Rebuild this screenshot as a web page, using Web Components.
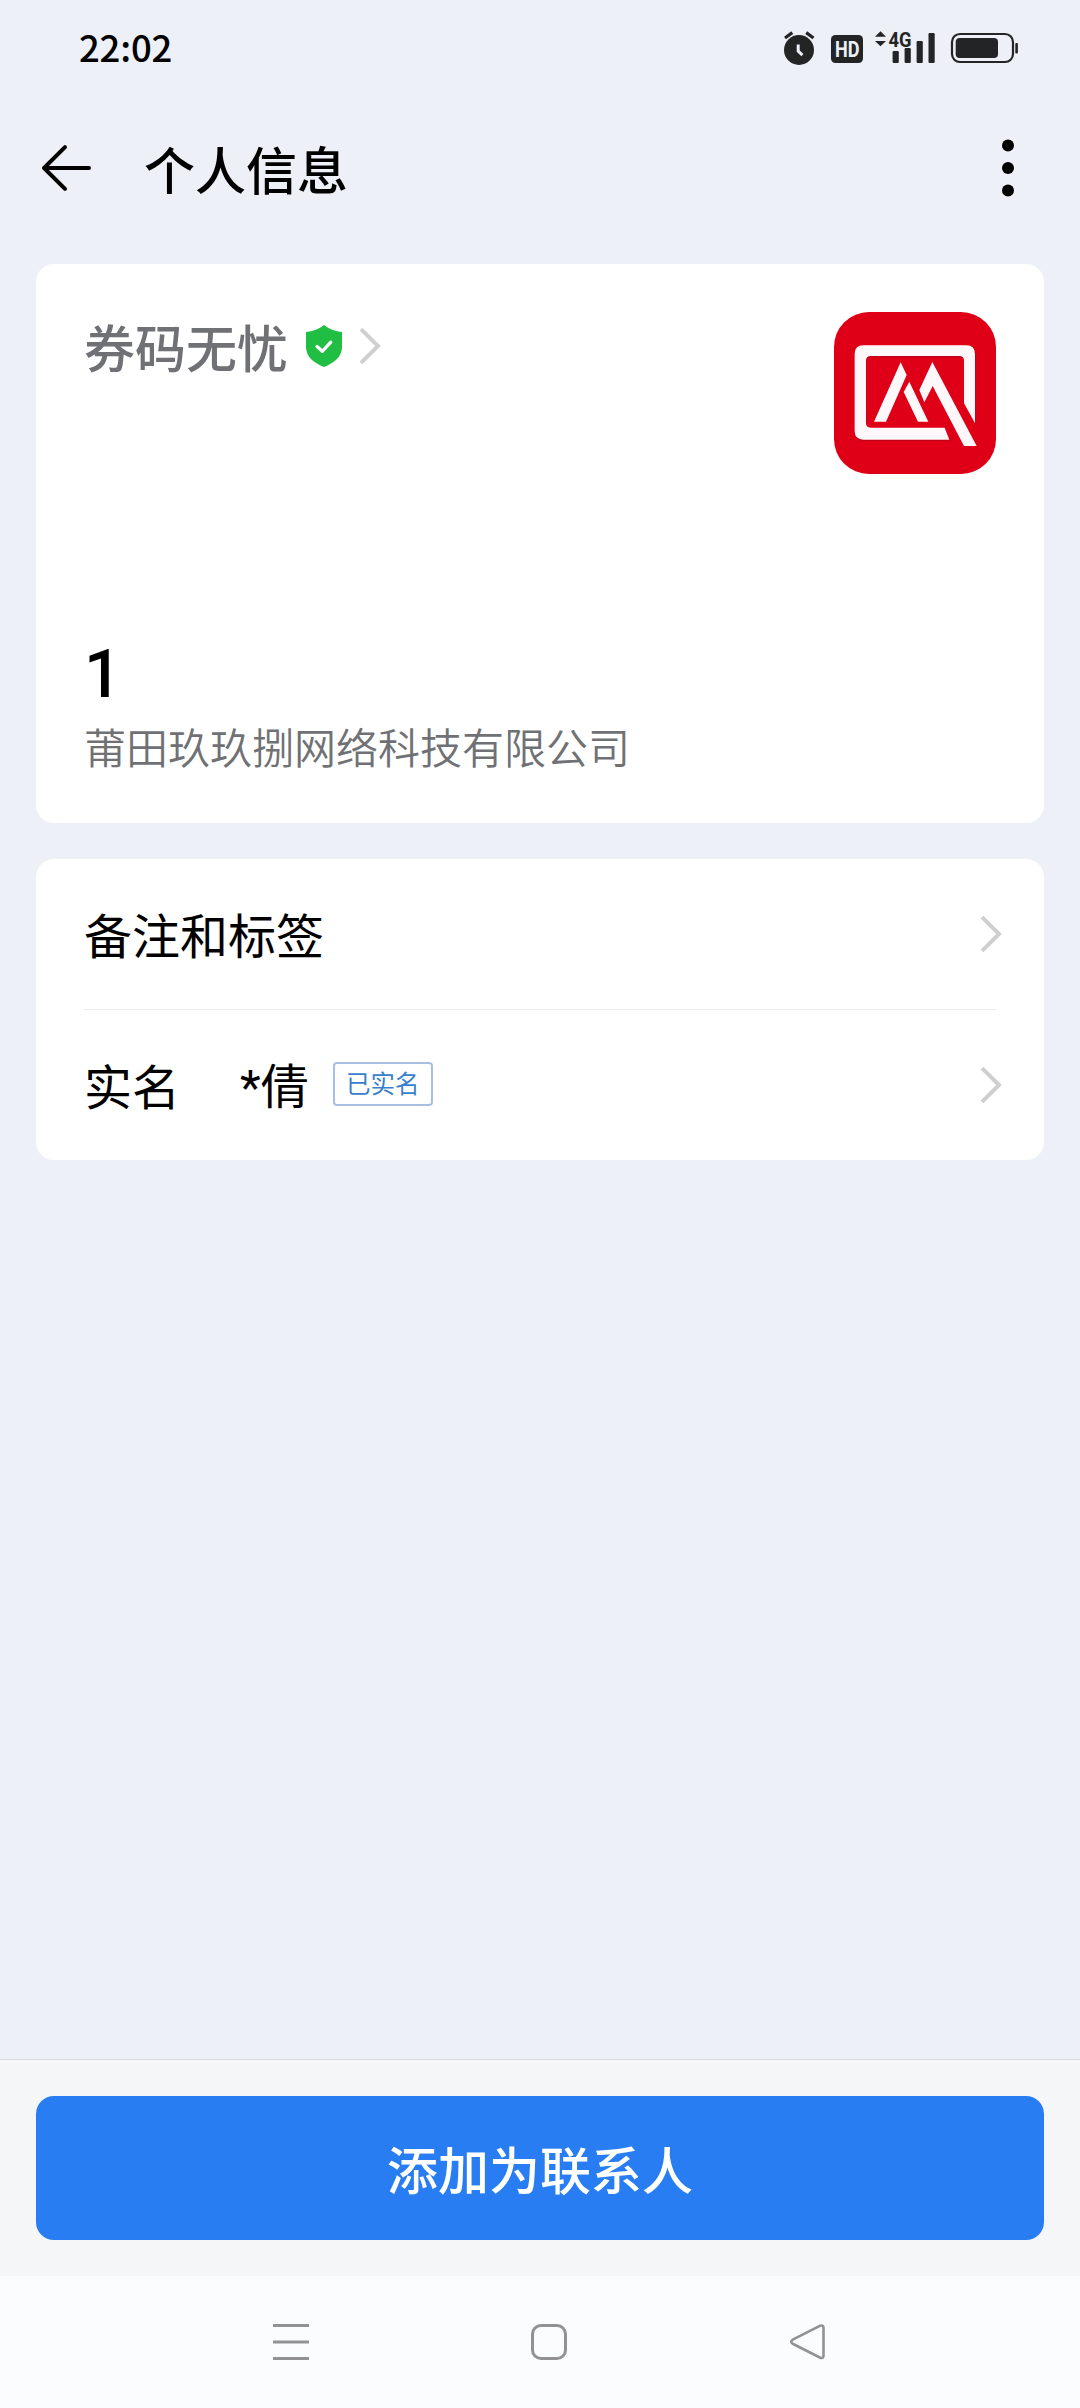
<!DOCTYPE html>
<html lang="zh-CN">
<head>
<meta charset="utf-8">
<title>个人信息</title>
<style>
html,body{margin:0;padding:0}
body{width:1080px;height:2408px;overflow:hidden;background:#edf0f6;font-family:"Noto Sans CJK SC",sans-serif;color:#000}
</style>
</head>
<body>
<profile-page></profile-page>
<script>
function define(name, html) {
  const t = document.createElement('template');
  t.innerHTML = html;
  customElements.define(name, class extends HTMLElement {
    constructor() {
      super();
      this.attachShadow({mode: 'open'}).appendChild(t.content.cloneNode(true));
    }
  });
}

define('status-bar', `
<style>
:host{display:flex;height:96px;box-sizing:border-box;padding:0 61px 0 79px;justify-content:space-between;align-items:flex-start}
.time{font-size:36.5px;line-height:54px;font-weight:500;margin-top:20px;letter-spacing:-.2px}
.icons{display:flex;margin-top:28px}
svg{display:block;height:40px}
</style>
<div class="time">22:02</div>
<div class="icons">
  <svg width="46" viewBox="780 28 46 40"><circle cx="799" cy="50" r="15" fill="#222426"/><path d="M785 38l7.3-5.4M806.2 32.6l7.3 5.4" stroke="#222426" stroke-width="3.2"/><path d="M798.2 44.5v6.6l4.2 4" stroke="#edf0f6" stroke-width="3" fill="none"/></svg>
  <svg width="47" viewBox="826 28 47 40"><rect x="831" y="35" width="32" height="28" rx="4.5" fill="#222426"/><text x="835" y="57" font-family="Roboto" font-weight="700" font-size="22.5" textLength="24.5" lengthAdjust="spacingAndGlyphs" fill="#edf0f6">HD</text></svg>
  <svg width="73" viewBox="873 28 73 40"><g fill="#222426"><path d="M875 36.8l5.5-5.6 5.5 5.6zM875 41l5.5 5.3 5.5-5.3z"/><rect x="892.6" y="51" width="6.2" height="12" rx="1.2"/><rect x="904.6" y="48" width="6.2" height="15" rx="1.2"/><rect x="916.6" y="41" width="6.2" height="22" rx="1.2"/><rect x="928.5" y="33" width="6.2" height="30" rx="1.2"/><text x="888.6" y="46.5" font-family="Roboto" font-weight="700" font-size="20.5" textLength="23" lengthAdjust="spacingAndGlyphs">4G</text></g></svg>
  <svg width="73" viewBox="946 28 73 40"><rect x="952" y="34" width="61" height="28" rx="8" fill="none" stroke="#222426" stroke-width="2.2"/><rect x="955.7" y="38" width="42.3" height="20" rx="4" fill="#222426"/><rect x="1015.3" y="43" width="2.6" height="10.5" rx="1" fill="#222426"/></svg>
</div>`);

define('title-bar', `
<style>
:host{display:flex;height:144px;align-items:center;padding:0 60px 0 36px}
svg{display:block}
.t{flex:1;margin-left:48px;font-size:51px;line-height:72px;font-weight:500}
</style>
<svg width="60" height="60" viewBox="36 138 60 60" fill="none" stroke="#000" stroke-width="4" stroke-linecap="round" stroke-linejoin="round"><path d="M89 168H44M65 147.2L44 168l21 20.8"/></svg>
<div class="t"><slot></slot></div>
<svg width="24" height="60" viewBox="996 138 24 60"><circle cx="1008" cy="145.5" r="6"/><circle cx="1008" cy="168" r="6"/><circle cx="1008" cy="190.5" r="6"/></svg>`);

define('arrow-icon', `
<style>:host{display:block;width:24px;height:42px}svg{display:block}</style>
<svg width="24" height="42" fill="none" stroke="#cfcfcf" stroke-width="4"><path d="M2 4.2L19 21 2 37.8"/></svg>`);

define('white-card', `
<style>:host{display:block;margin:0 36px;background:#fff;border-radius:18px;box-sizing:border-box}</style>
<slot></slot>`);

define('verified-shield', `
<style>:host{display:block}svg{display:block}</style>
<svg width="36" height="42"><path d="M18 0C23 4 29 6.5 36 7V22C36 32 28 38 18 42C8 38 0 32 0 22V7C7 6.5 13 4 18 0Z" fill="#20bf44"/><path d="M11 21.5l5.3 4.8 8.5-9.2" fill="none" stroke="#fff" stroke-width="3.2" stroke-linecap="round" stroke-linejoin="round"/></svg>`);

define('brand-logo', `
<style>:host{display:block}svg{display:block}</style>
<svg width="162" height="162" viewBox="72 66 486 486"><rect x="72" y="66" width="486" height="486" rx="105" fill="#df0018"/>
<path d="M495 400V192Q495 166 469 166H160Q134 166 134 192V423Q134 449 160 449H418L404 413H182Q168 413 168 399V212Q168 198 182 198H448Q462 198 462 212V340Z" fill="#a9051a" transform="translate(2 4)" opacity=".6"/>
<path d="M495 400V192Q495 166 469 166H160Q134 166 134 192V423Q134 449 160 449H418L404 413H182Q168 413 168 399V212Q168 198 182 198H448Q462 198 462 212V340ZM272 217L290 255 228 395H192ZM298 275L355 395H324L281 306ZM367 216L500 468H462L368 288 343 337 328 300Z" fill="#fff8fb"/></svg>`);

define('merchant-card', `
<style>
:host{display:flex;height:559px;box-sizing:border-box;padding:48px 48px 0;justify-content:space-between}
.info{display:flex;flex-direction:column;height:100%}
.name{display:flex;align-items:center;height:68px;color:#707175;font-size:51px;font-weight:500}
.name span{line-height:68px}
verified-shield{margin-left:18px}
arrow-icon{margin-left:17px}
.num{font:500 66px/78px Roboto,sans-serif;margin-top:256px}
.company{font-size:42px;line-height:60px;color:#707175;font-weight:350;margin-top:2px}
</style>
<div class="info">
  <div class="name"><span>券码无忧</span><verified-shield></verified-shield><arrow-icon></arrow-icon></div>
  <div class="num">1</div>
  <div class="company">莆田玖玖捌网络科技有限公司</div>
</div>
<brand-logo></brand-logo>`);

define('list-row', `
<style>
:host{display:flex;height:150px;align-items:center;margin:0 40px 0 48px;font-size:48px;line-height:70px}
.body{flex:1;display:flex;align-items:center;padding-bottom:3px}
</style>
<div class="body"><slot></slot></div><arrow-icon></arrow-icon>`);

define('row-divider', `<style>:host{display:block;height:1px;margin:0 48px;background:#ebecef}</style>`);

define('status-tag', `
<style>:host{display:block;box-sizing:border-box;width:100px;height:44px;border:2px solid #a6c0e4;border-radius:4px;color:#3a7fcb;font-size:24.5px;line-height:38px;text-align:center}</style>
<slot></slot>`);

define('action-footer', `
<style>
:host{display:block;height:217px;box-sizing:border-box;background:#f5f6f8;border-top:1px solid #d8dae0;padding:36px 36px 0}
button{display:block;width:100%;height:144px;border:0;border-radius:18px;background:#287df2;color:#fff;font:500 51px/72px "Noto Sans CJK SC",sans-serif;padding:0}
</style>
<button><slot></slot></button>`);

define('system-nav', `
<style>
:host{display:flex;height:132px;background:#fbfcfe;box-sizing:border-box;padding:0 144px 0 162px}
div{width:258px;display:flex;align-items:center;justify-content:center}
svg{display:block;fill:none;stroke:#929294;stroke-width:3}
</style>
<div><svg width="40" height="40"><path d="M2 3.4h36M2 20h36M2 36.5h36"/></svg></div>
<div><svg width="40" height="40"><rect x="3.5" y="3.5" width="33" height="33" rx="8.5"/></svg></div>
<div><svg width="40" height="40"><path d="M33.3 3.7L6.2 17.3Q2.2 19.7 6.2 22L33.3 35.7Q36.5 36.7 36.5 33.4V6Q36.5 2.7 33.3 3.7Z" stroke-width="2.6"/></svg></div>`);

define('profile-page', `
<style>
:host{display:flex;flex-direction:column;width:1080px;height:2408px;background:#edf0f6}
main{flex:1;display:flex;flex-direction:column;gap:36px;padding-top:24px}
.val{margin-left:60px;padding-top:9px;font-family:Roboto,"Noto Sans CJK SC",sans-serif}
status-tag{margin-left:24px;margin-top:1px}
</style>
<status-bar></status-bar>
<title-bar>个人信息</title-bar>
<main>
  <white-card><merchant-card></merchant-card></white-card>
  <white-card>
    <list-row><span>备注和标签</span></list-row>
    <row-divider></row-divider>
    <list-row><span>实名</span><span class="val">*倩</span><status-tag>已实名</status-tag></list-row>
  </white-card>
</main>
<action-footer>添加为联系人</action-footer>
<system-nav></system-nav>`);
</script>
</body>
</html>
